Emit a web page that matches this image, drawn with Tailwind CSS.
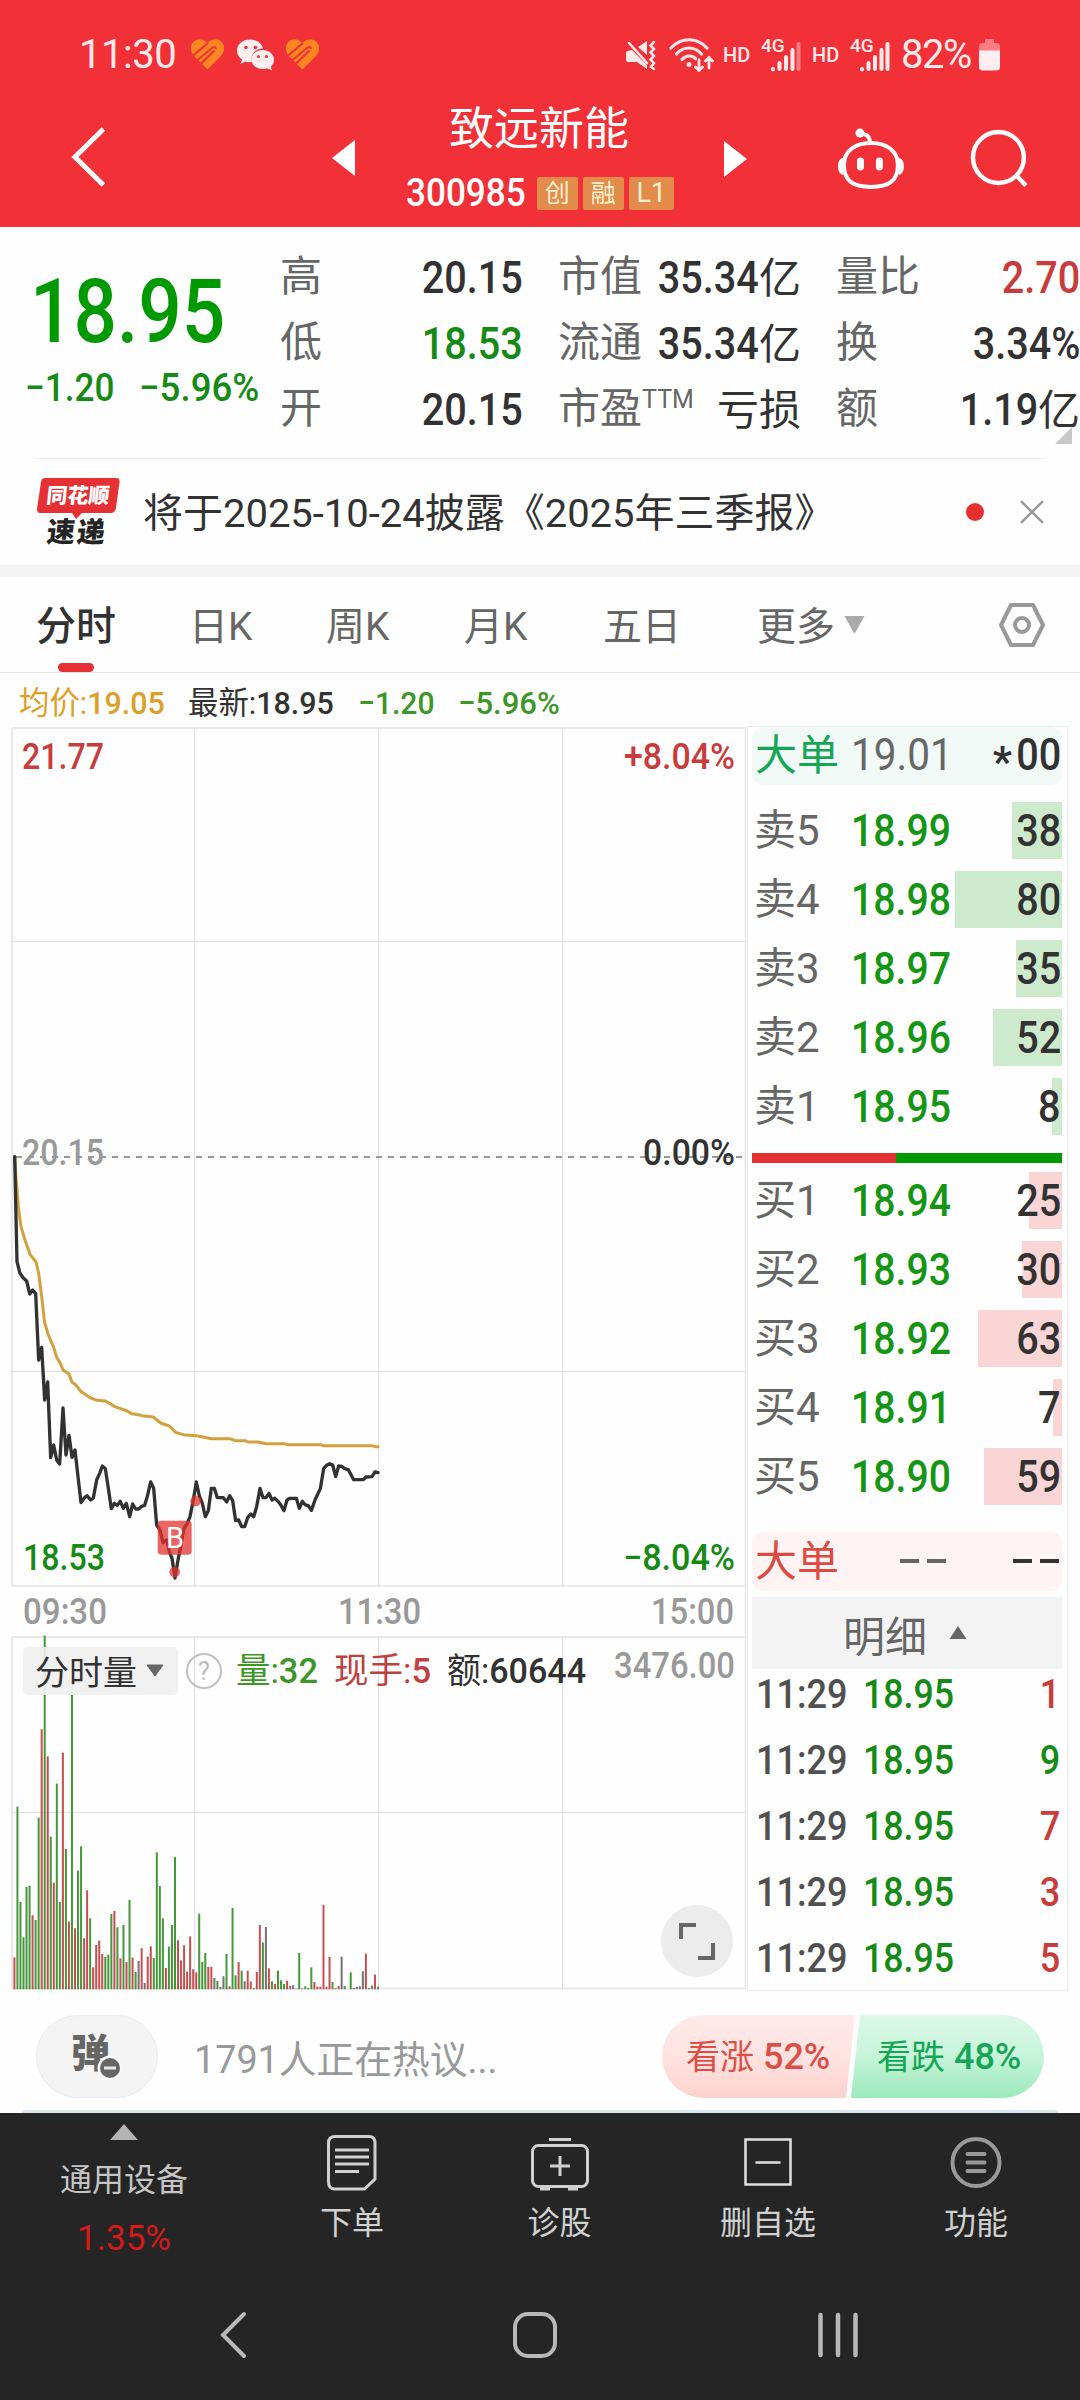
<!DOCTYPE html>
<html lang="zh-CN">
<head>
  <meta charset="UTF-8" />
  <meta name="viewport" content="width=device-width, initial-scale=1.0"/>
  <title>致远新能 300985</title>
  <script src="https://cdn.jsdelivr.net/npm/@tailwindcss/browser@4"></script>
</head>
<body class="w-[1080px] h-[2400px] overflow-hidden bg-[#fefefe] text-[#323232] font-['Roboto','Noto_Sans_CJK_SC',sans-serif]">

  <!-- Status bar + title -->
  <header class="h-[227px] bg-[#f23037] text-white">
    <div class="h-[92px] pt-[17px] pl-[79px] pr-[78px] flex items-center justify-between text-[#ffe9ea]">
      <div class="flex items-center">
        <span class="w-[111px] text-[40px] leading-none tracking-[-0.5px]">11:30</span>
        <svg class="w-[35px] h-[31px]" viewBox="0 0 35 31" fill="none">
          <path d="M17.500 30.500L4 17C-2 10 1 1 9 .5C13 .3 15.500 2 17.500 4C19.500 2 22 .3 26 .5C34 1 37 10 31 17Z" fill="#ff8620"/>
          <path d="M2 17.500L18 4M10 25.500L24.500 11.500" stroke="#f23037" stroke-width="2.200"/>
          <path d="M7 21.500L22.500 8.500Q26 7 26 10" stroke="#f23037" stroke-width="1.800"/>
        </svg>
        <svg class="w-[38px] h-[32px] ml-[12px]" viewBox="0 0 38 32">
          <path fill="#ffeef0" d="M13 0.500C6 .5 0 5 0 11.500C0 15.500 2 18.500 5 20.500L3.500 25L8.500 22.500C11 23.500 13 23.500 15 23C13 15 19 9.500 26 9.500C25 4 19 .5 13 .5Z"/>
          <path fill="#ffeef0" d="M25.500 11C19.500 11 14.500 15 14.500 20.500C14.500 26 19.500 30 25.500 30C27.500 30 29 29.700 30.500 29.200L35 31.500L33.800 27.500C36 25.800 37 23.500 37 20.500C37 15 31.500 11 25.500 11Z"/>
          <g fill="#f23037"><circle cx="9" cy="8.500" r="1.800"/><circle cx="18.500" cy="8.500" r="1.800"/><circle cx="21.500" cy="17.500" r="1.600"/><circle cx="29.500" cy="17.500" r="1.600"/></g>
        </svg>
        <svg class="w-[35px] h-[31px] ml-[10px]" viewBox="0 0 35 31" fill="none">
          <path d="M17.500 30.500L4 17C-2 10 1 1 9 .5C13 .3 15.500 2 17.500 4C19.500 2 22 .3 26 .5C34 1 37 10 31 17Z" fill="#ff8620"/>
          <path d="M2 17.500L18 4M10 25.500L24.500 11.500" stroke="#f23037" stroke-width="2.200"/>
          <path d="M7 21.500L22.500 8.500Q26 7 26 10" stroke="#f23037" stroke-width="1.800"/>
        </svg>
      </div>
      <div class="flex items-center">
        <!-- muted + vibrate -->
        <svg class="w-[30px] h-[32px]" viewBox="0 0 30 32" fill="none" stroke="#ffe9ea" stroke-linecap="round">
          <path d="M2 12L6 11L21 26V30L11 23H2Q0 23 0 21V14Q0 12 2 12ZM12 8L21 2V16Z" fill="#ffe9ea" stroke="none"/>
          <path d="M3 4L21 24" stroke-width="2.500"/>
          <path d="M28 3L24.500 6.500L28 10L24.500 13.500L28 17L24.500 20.500L28 24L25 28L28 30" stroke-width="2.500"/>
        </svg>
        <!-- wifi -->
        <svg class="w-[46px] h-[34px] ml-[13px]" viewBox="0 0 46 34" fill="none" stroke="#ffe9ea" stroke-width="3.200" stroke-linecap="round">
          <path d="M2 10C12 -1 28 -1 38 10M7.500 16C14.500 8 25.500 8 32.500 16M13 21.500C17 17 23 17 26.500 20.500"/>
          <circle cx="20" cy="26.500" r="2.500" fill="#ffe9ea" stroke="none"/>
          <path d="M30 22V32M26.500 29L30 32.500L33.500 29M40 30V19.500M36.500 23L40 19.500L43.500 23" stroke-width="2.800"/>
        </svg>
        <span class="w-[28px] ml-[8px] text-[20px] leading-none font-medium">HD</span>
        <svg class="w-[40px] h-[36px] ml-[11px] overflow-visible" viewBox="0 0 40 36">
          <text x="-1" y="15" font-size="19" font-weight="500" fill="#ffe9ea">4G</text>
          <g stroke="#ffe9ea" stroke-width="4" stroke-linecap="round"><path d="M11 32V32.500M17.500 26V32M24 20V32M30.500 13V32"/><path d="M36.500 7V32" stroke="#ff7b82"/></g>
        </svg>
        <span class="w-[28px] ml-[10px] text-[20px] leading-none font-medium">HD</span>
        <svg class="w-[40px] h-[36px] ml-[11px] overflow-visible" viewBox="0 0 40 36">
          <text x="-1" y="15" font-size="19" font-weight="500" fill="#ffe9ea">4G</text>
          <path d="M11 32V32.500M17.500 26V32M24 20V32M30.500 13V32M36.500 7V32" stroke="#ffe9ea" stroke-width="4" stroke-linecap="round"/>
        </svg>
        <span class="w-[75px] ml-[10px] text-[40px] leading-none tracking-[-1.5px]">82%</span>
        <svg class="w-[22px] h-[32px] ml-[3px] mr-px" viewBox="0 0 22 32">
          <path d="M6 0H15V4H18Q21 4 21 8V12H0V8Q0 4 3 4H6Z" fill="#ff7b82"/>
          <path d="M0 11.500H21V28Q21 31.500 17 31.500H4Q0 31.500 0 28Z" fill="#ffeef0"/>
        </svg>
      </div>
    </div>
    <div class="h-[135px] pl-[70px] pr-[50px] flex items-start">
      <svg class="w-[37px] h-[64px] mt-[33px]" viewBox="0 0 37 64" fill="none" stroke="#fff" stroke-width="5"><path d="M33.500 4L5 32L33.500 60"/></svg>
      <svg class="w-[25px] h-[36px] mt-[48px] ml-[224px]" viewBox="0 0 25 36" fill="#fff"><path d="M24 0V36L1 18Z"/></svg>
      <div class="w-[270px] ml-[50px] flex flex-col items-start">
        <h1 class="pl-[43px] mt-[15px] text-[45px] leading-[46px] whitespace-nowrap">致远新能</h1>
        <div class="mt-[22px] flex items-center h-[36px] text-[25px] leading-[33px] text-[#fff0d0]">
          <span class="w-[131px] text-[39px] leading-none font-medium text-white"><span class="inline-block origin-left scale-x-90">300985</span></span>
          <span class="w-[41px] h-[33px] rounded-xs bg-[#e28b4a] text-center">创</span>
          <span class="w-[41px] h-[33px] ml-[5px] rounded-xs bg-[#e28b4a] text-center">融</span>
          <span class="w-[45px] h-[33px] ml-[5px] rounded-xs bg-[#e28b4a] text-center text-[27px]">L1</span>
        </div>
      </div>
      <svg class="w-[25px] h-[36px] mt-[49px] ml-[49px]" viewBox="0 0 25 36" fill="#fff"><path d="M0 0V36L23 18Z"/></svg>
      <svg class="w-[68px] h-[62px] mt-[35px] ml-[88px]" viewBox="0 0 68 62" fill="none" stroke="#fff" stroke-width="4">
        <path d="M34 16C50 16 61 24 61 38C61 54 52 60 34 60C16 60 7 54 7 38C7 24 18 16 34 16Z"/>
        <path d="M33 16C33 9 30 7 24 7"/>
        <circle cx="23" cy="6" r="4.500" fill="#fff" stroke="none"/>
        <path d="M6 31Q1 32 1 39Q1 47 6 48ZM62 31Q67 32 67 39Q67 47 62 48Z" fill="#fff" stroke="none"/>
        <path d="M23.500 34V40M42.500 34V40" stroke-width="7" stroke-linecap="round"/>
      </svg>
      <svg class="w-[60px] h-[62px] mt-[36px] ml-[65px]" viewBox="0 0 60 62" fill="none" stroke="#fff" stroke-width="4.500"><circle cx="28.500" cy="29.500" r="25.500"/><path d="M46 47L56 57.500"/></svg>
    </div>
  </header>

  <!-- Quote -->
  <section class="relative h-[231px] pt-[15px] flex">
    <div class="w-[280px] font-medium text-[#009900]">
      <div class="mt-[26px] h-[88px] pl-[30px] text-[89px] leading-[88px]"><span class="inline-block origin-left scale-x-[.86]">18.95</span></div>
      <div class="mt-[9px] pl-[25px] h-[46px] flex items-center text-[39px] leading-none text-[#158a15] whitespace-nowrap">
        <span class="w-[114px]"><span class="inline-block origin-left scale-x-90">−1.20</span></span>
        <span class="inline-block origin-left scale-x-[.94]">−5.96%</span>
      </div>
    </div>
    <div id="quote" class="pt-[2px] grid grid-cols-[243px_243px_244px] auto-rows-[66px] gap-x-[35px] text-[42px] leading-none"></div>
    <svg class="absolute left-[1055px] top-[200px] w-[17px] h-[17px]" viewBox="0 0 17 17"><path d="M17 0V17H0Z" fill="#c8c8c8"/></svg>
  </section>

  <!-- News strip -->
  <section class="h-[107px] mx-[36px] border-t border-[#ebebeb] flex items-center">
    <div class="w-[84px] h-[70px] relative">
      <svg class="absolute inset-0 w-[84px] h-[70px]" viewBox="0 0 84 70"><path d="M9 1H80Q84 1 83.500 5L80 31Q79 36 75 36H46L40 42L36 36H4Q1 36 1 32L5 5Q5.500 1 9 1Z" fill="#e53034"/></svg>
      <div class="absolute left-[7px] top-[7px] w-[70px] text-center text-[21px] leading-[24px] font-black text-white -skew-x-6">同花顺</div>
      <div class="absolute left-[8px] top-[41px] w-[66px] text-center text-[28px] leading-[30px] font-black text-[#252525] -skew-x-6 tracking-[2px]">速递</div>
    </div>
    <p class="ml-[23px] pt-[4px] w-[824px] text-[39.500px] leading-none whitespace-nowrap"><span class="inline-block origin-left scale-x-[1.012]">将于2025-10-24披露《2025年三季报》</span></p>
    <span class="w-[18px] h-[18px] rounded-full bg-[#e63030]"></span>
    <svg class="w-[24px] h-[24px] ml-[36px]" viewBox="0 0 24 24" stroke="#999" stroke-width="2.500"><path d="M1 1L23 23M23 1L1 23"/></svg>
  </section>
  <div class="h-[12px] bg-[#f4f4f4]"></div>

  <!-- Period tabs -->
  <nav class="h-[96px] border-b border-[#e4e4e4] flex items-center text-[39px] leading-none text-[#666] whitespace-nowrap">
    <a class="relative h-full w-[157px] pl-[36px] pt-[5px] flex items-center text-[40px] font-medium text-[#323232]">分时
      <span class="absolute left-[58px] bottom-0 w-[36px] h-[9px] rounded-md bg-[#e53034]"></span>
    </a>
    <a class="w-[136px] pl-[32px] pt-[5px]">日K</a>
    <a class="w-[138px] pl-[33px] pt-[5px]">周K</a>
    <a class="w-[138px] pl-[33px] pt-[5px]">月K</a>
    <a class="w-[154px] pl-[34px] pt-[5px]">五日</a>
    <a class="w-[276px] pl-[34px] pt-[5px] flex items-center">更多
      <svg class="w-[21px] h-[17px] ml-[9px] mb-[5px]" viewBox="0 0 21 17"><path d="M1 0H20L10.500 17Z" fill="#aaa" stroke="#aaa" stroke-linejoin="round"/></svg>
    </a>
    <svg class="w-[46px] h-[46px]" viewBox="0 0 46 46" fill="none" stroke="#999" stroke-width="4" stroke-linejoin="round"><path d="M12 3H34L44 23L34 43H12L2 23Z"/><circle cx="23" cy="23" r="7"/></svg>
  </nav>

  <main class="relative flex">
    <!-- Left: intraday + volume -->
    <div class="w-[747px]">
      <div class="h-[54px] pt-[5px] pl-[19px] flex items-center text-[32px] leading-none font-medium whitespace-nowrap text-[#3c9628]">
        <span class="w-[169px] text-[#dca028]"><span class="inline-block origin-left scale-x-[.95]"><span class="font-normal">均价:</span>19.05</span></span>
        <span class="w-[170px] text-[#323232]"><span class="inline-block origin-left scale-x-[.95]"><span class="font-normal">最新:</span>18.95</span></span>
        <span class="w-[100px]"><span class="inline-block origin-left scale-x-[.94]">−1.20</span></span>
        <span class="inline-block origin-left scale-x-[.97]">−5.96%</span>
      </div>

      <svg class="block w-[747px] h-[1265px]" viewBox="0 727 747 1265" fill="none">
        <g stroke="#e6e6e6" stroke-width="1.500">
          <path d="M12 728H746M12 1586H746M12 1637H746M12 1988.500H746M12 728V1586M12 1637V1989M745.500 728V1989" stroke="#e9e9e9" stroke-width="2"/>
          <path d="M12 941.500H745M12 1371.500H745M12 1812.500H745M194.500 728V1586M378.500 728V1586M562.500 728V1586M194.500 1637V1989M378.500 1637V1989M562.500 1637V1989" stroke="#e0e0e0" stroke-width="1"/>
        </g>
        <path d="M16 1157H746" stroke="#999" stroke-width="2" stroke-dasharray="6 6"/>

        <g transform="translate(0 1140) scale(.33333)" stroke-linejoin="round" stroke-linecap="round">
          <polyline stroke="#d2a03c" stroke-width="9" points="44,50 48,110 55,200 63,260 75,300 90,343 108,366 116,400 125,470 134,548 145,585 161,622 170,652 180,668 189,690 207,702 216,727 228,735 243,755 252,760 268,772 290,781 316,783 345,800 379,812 395,821 416,824 425,827 460,831 482,849 508,858 527,877 550,884 590,887 634,896 690,896 705,902 735,902 744,906 774,906 798,911 852,911 862,914 960,914 970,917 1115,917 1125,920 1134,920"/>
          <polyline stroke="#323232" stroke-width="10" points="44,50 51,365 60,400 70,414 80,423 89,462 98,450 107,461 116,660 125,622 134,780 143,726 152,953 161,915 170,960 179,972 189,804 198,945 207,886 216,952 225,930 234,1010 243,1088 252,1075 261,1067 272,1080 280,1074 290,1020 300,998 307,978 316,986 325,1045 334,1106 343,1090 352,1096 361,1084 370,1105 379,1090 389,1130 398,1092 407,1107 416,1107 425,1099 434,1096 443,1065 452,1026 461,1045 470,1155 480,1170 489,1208 500,1200 508,1235 516,1255 525,1314 534,1260 543,1215 552,1165 562,1150 570,1130 580,1080 589,1026 598,1068 607,1090 616,1130 625,1112 634,1045 643,1045 652,1073 670,1073 680,1086 689,1067 698,1082 707,1142 716,1140 725,1160 734,1160 743,1133 752,1122 761,1130 770,1100 780,1045 789,1073 798,1073 807,1060 816,1080 825,1075 834,1084 843,1096 852,1112 861,1080 870,1075 889,1075 898,1105 907,1084 916,1095 925,1097 934,1111 945,1080 961,1046 971,986 980,976 989,971 998,975 1007,1010 1016,978 1025,979 1034,986 1045,989 1061,1019 1090,1019 1098,1011 1116,1010 1125,996 1134,998"/>
          <g fill="#e63232" fill-opacity=".75">
            <rect x="473" y="1142" width="102" height="102" rx="10"/>
            <circle cx="587" cy="1083" r="16"/>
            <circle cx="524" cy="1296" r="16"/>
          </g>
        </g>
        <text x="175" y="1548" text-anchor="middle" font-size="29" fill="#fff">B</text>

        <!-- volume bars -->
        <g id="volume"></g>

        <g font-size="36" font-weight="500">
          <text x="22" y="769" fill="#c83c3c" textLength="82" lengthAdjust="spacingAndGlyphs">21.77</text>
          <text x="624" y="769" fill="#c83c3c" textLength="111" lengthAdjust="spacingAndGlyphs">+8.04%</text>
          <text x="22" y="1165" fill="#999" textLength="82" lengthAdjust="spacingAndGlyphs">20.15</text>
          <text x="643" y="1165" fill="#323232" textLength="92" lengthAdjust="spacingAndGlyphs">0.00%</text>
          <text x="23" y="1570" fill="#158a15" textLength="82" lengthAdjust="spacingAndGlyphs">18.53</text>
          <text x="623" y="1570" fill="#158a15" textLength="112" lengthAdjust="spacingAndGlyphs">−8.04%</text>
          <g fill="#999">
            <text x="23" y="1624" textLength="84" lengthAdjust="spacingAndGlyphs">09:30</text>
            <text x="338" y="1624" textLength="83" lengthAdjust="spacingAndGlyphs">11:30</text>
            <text x="651" y="1624" textLength="83" lengthAdjust="spacingAndGlyphs">15:00</text>
            <text x="614" y="1678" textLength="121" lengthAdjust="spacingAndGlyphs">3476.00</text>
          </g>
        </g>

        <rect x="23" y="1647" width="155" height="48" rx="5" fill="#f0f0f0" fill-opacity=".9"/>
        <text x="35" y="1685" font-size="34" fill="#323232" textLength="102">分时量</text>
        <path d="M147 1665H163L155 1676Z" fill="#666" stroke="#666" stroke-linejoin="round"/>
        <circle cx="204" cy="1671" r="17" stroke="#c0c0c0" stroke-width="2"/>
        <text x="204" y="1680" text-anchor="middle" font-size="25" fill="#bbb">?</text>
        <g font-size="35" font-weight="500">
          <text x="236" y="1683" fill="#3c9628" textLength="82" lengthAdjust="spacingAndGlyphs"><tspan font-weight="400">量:</tspan>32</text>
          <text x="334" y="1683" fill="#be4141" textLength="97" lengthAdjust="spacingAndGlyphs"><tspan font-weight="400">现手:</tspan>5</text>
          <text x="447" y="1683" fill="#323232" textLength="139" lengthAdjust="spacingAndGlyphs"><tspan font-weight="400">额:</tspan>60644</text>
        </g>

        <circle cx="697" cy="1941" r="36" fill="#ececec"/>
        <path d="M681 1939V1925H696M698 1958H713V1943" stroke="#666" stroke-width="4"/>
      </svg>
    </div>

    <!-- Right: order book + ticks -->
    <aside class="w-[321px] h-[1265px] mt-[53px] pl-[4px] pr-[5px] border border-[#ebebeb] leading-none">
      <div class="h-[58px] pl-[3px] pr-px pb-[3px] flex items-center rounded-xl bg-[#f1faf6] text-[42px] whitespace-nowrap">
        <span class="w-[96px] pt-[2px] text-[#14a655]">大单</span>
        <span class="w-[110px] text-[45px] text-[#666]"><span class="inline-block origin-left scale-x-[.9]">19.01</span></span>
        <span class="flex-1 flex justify-end items-center text-[45px] font-medium"><span class="-mr-[2px] pt-[14px] text-[42px] font-bold">*</span><span class="inline-block origin-right scale-x-[.88]">00</span></span>
      </div>
      <div id="asks" class="mt-[17px] flex flex-col gap-[12px]"></div>
      <div class="mt-[18px] h-[10px] flex"><div class="w-[144px] bg-[#e53034]"></div><div class="flex-1 bg-[#009900]"></div></div>
      <div id="bids" class="mt-[9px] flex flex-col gap-[12px]"></div>
      <div class="mt-[27px] h-[59px] pl-[3px] pr-[3px] pb-[3px] flex items-center rounded-xl bg-[#fff4f3] text-[42px]">
        <span class="w-[145px] pt-[3px] text-[#dc4a42]">大单</span>
        <span class="flex gap-[8px] pt-[2px]"><i class="w-[19px] h-[4px] bg-[#666]"></i><i class="w-[19px] h-[4px] bg-[#666]"></i></span>
        <span class="flex gap-[8px] pt-[2px] ml-auto"><i class="w-[19px] h-[4px] bg-[#323232]"></i><i class="w-[19px] h-[4px] bg-[#323232]"></i></span>
      </div>
      <div class="mt-[6px] h-[72px] pl-[91px] flex items-center bg-[#f3f3f3] text-[42px] text-[#666]">
        <span class="pt-[9px]">明细</span>
        <svg class="w-[18px] h-[13px] ml-[22px] mb-[2px]" viewBox="0 0 18 13"><path d="M9 0L17.500 13H.5Z" fill="#666"/></svg>
      </div>
      <div id="ticks" class="mt-[-8px]"></div>
    </aside>
  </main>

  <!-- Discussion bar -->
  <section class="h-[95px] mt-[23px] px-[36px] flex items-start">
    <div class="relative w-[122px] h-[83px] rounded-full bg-[#f4f4f4] border border-[#ebebeb]">
      <span class="absolute left-[34px] top-[17px] text-[39px] leading-[42px] font-black text-[#666]">弹</span>
      <svg class="absolute left-[60px] top-[39px] w-[26px] h-[26px]" viewBox="0 0 26 26"><circle cx="13" cy="13" r="12.500" fill="#f8f8f8"/><circle cx="13" cy="13" r="10" fill="#666"/><path d="M7 13H19" stroke="#e8e8e8" stroke-width="3"/></svg>
    </div>
    <p class="w-[466px] pl-[36px] pt-[2px] text-[38px] leading-[86px] text-[#999] whitespace-nowrap"><span class="inline-block origin-left scale-x-[.993]">1791人正在热议...</span></p>
    <div class="relative ml-[38px] w-[382px] h-[83px] flex text-[34px] leading-[84px] font-medium whitespace-nowrap">
      <svg class="absolute inset-0 w-[382px] h-[83px]" viewBox="0 0 382 83">
        <defs>
          <linearGradient id="up" x2="0" y2="1"><stop offset="0" stop-color="#ffeae9"/><stop offset=".5" stop-color="#ffe3e1"/><stop offset="1" stop-color="#fcd2cd"/></linearGradient>
          <linearGradient id="down" x2="0" y2="1"><stop offset="0" stop-color="#dcf8e7"/><stop offset=".5" stop-color="#c6f4d9"/><stop offset="1" stop-color="#9be9bb"/></linearGradient>
        </defs>
        <path d="M41.500 0H193L184 83H41.500A41.500 41.500 0 0 1 41.500 0Z" fill="url(#up)"/>
        <path d="M198 0H340.500A41.500 41.500 0 0 1 340.500 83H189Z" fill="url(#down)"/>
      </svg>
      <span class="relative w-[192px] pl-[24px] text-[#dc4f47]"><span class="font-normal">看涨</span><span class="text-[36px]"> 52%</span></span>
      <span class="relative pl-[23px] text-[#14a655]"><span class="font-normal">看跌</span><span class="text-[36px]"> 48%</span></span>
    </div>
  </section>
  <div class="h-[3px] mx-[22px] rounded-t-lg bg-[#dbe7f2]"></div>

  <!-- Bottom toolbar + system nav -->
  <footer class="h-[287px] bg-[#252525] text-[#d0d0d0] text-[32px] leading-none">
    <div class="h-[157px] flex pl-[10px]">
      <div class="w-[228px] flex flex-col items-center text-[#c4c4c4]">
        <svg class="w-[28px] h-[16px] mt-[11px]" viewBox="0 0 28 16"><path d="M14 0L28 16H0Z" fill="#b3b3b3"/></svg>
        <span class="mt-[24px]">通用设备</span>
        <span class="mt-[25px] text-[35px] text-[#d41a1a]"><span class="inline-block">1.35%</span></span>
      </div>
      <div class="w-[228px] flex flex-col items-center">
        <svg class="w-[50px] h-[56px] mt-[22px]" viewBox="0 0 50 56" fill="none" stroke="#d0d0d0" stroke-width="3"><path d="M8 1.500H42Q48 1.500 48 8V44L37.500 54H8Q1.500 54 1.500 47V8Q1.500 1.500 8 1.500ZM8 15H42M8 22H42M8 29H42M8 36.500H32"/></svg>
        <span class="mt-[16px]">下单</span>
      </div>
      <div class="w-[187px] flex flex-col items-center">
        <svg class="w-[58px] h-[53px] mt-[25px]" viewBox="0 0 58 53" fill="none" stroke="#d0d0d0" stroke-width="3"><rect x="1.500" y="7.500" width="55" height="41" rx="6"/><path d="M18 1.500H40M29 18V38M19 28H39M9 51H19M37 51H47"/></svg>
        <span class="mt-[16px]">诊股</span>
      </div>
      <div class="w-[230px] flex flex-col items-center">
        <svg class="w-[48px] h-[48px] mt-[25px]" viewBox="0 0 48 48" fill="none" stroke="#e0e0e0" stroke-width="2.500"><rect x="1.500" y="1.500" width="45" height="45"/><path d="M11.500 24.500H36.500"/></svg>
        <span class="mt-[21px]">删自选</span>
      </div>
      <div class="w-[186px] flex flex-col items-center">
        <svg class="w-[52px] h-[52px] mt-[23px]" viewBox="0 0 52 52" fill="none" stroke="#999" stroke-width="4"><circle cx="26" cy="26.500" r="23.500"/><path d="M17.500 18H34.500M17.500 26.500H34.500M17.500 35H34.500" stroke-linecap="round"/></svg>
        <span class="mt-[19px]">功能</span>
      </div>
    </div>
    <div class="h-[130px] pt-[41px] flex">
      <svg class="w-[30px] h-[48px] ml-[218px]" viewBox="0 0 30 48" fill="none" stroke="#b8b8b8" stroke-width="4" stroke-linecap="round"><path d="M26 3L5 24L26 45"/></svg>
      <svg class="w-[46px] h-[48px] ml-[264px]" viewBox="0 0 46 48" fill="none" stroke="#b8b8b8" stroke-width="4"><rect x="3" y="3" width="40" height="42" rx="13"/></svg>
      <svg class="w-[42px] h-[48px] ml-[259px]" viewBox="0 0 42 48" stroke="#b8b8b8" stroke-width="4.500" stroke-linecap="round"><path d="M3.500 4V44M21 4V44M38.500 4V44"/></svg>
    </div>
  </footer>

  <script>
    const quote = [
      ['高', '20.15'], ['市值', '35.34亿'], ['量比', '2.70', 'text-[#c83c3c]'],
      ['低', '18.53', 'text-[#158a15]'], ['流通', '35.34亿'], ['换', '3.34%'],
      ['开', '20.15'], ['市盈<sup class="text-[25px] -top-[15px]">TTM</sup>', '亏损'], ['额', '1.19亿']
    ];
    document.getElementById('quote').innerHTML = quote.map(([label, value, color]) => `
      <div class="flex items-center justify-between whitespace-nowrap">
        <span class="text-[#666]">${label}</span>
        <span class="text-[45px] font-medium ${color || ''}">${value.replace(/([\d.%]+)/, '<span class="inline-block -ml-4 origin-right scale-x-[.88]">$1</span>').replace(/(亿|亏损)/, '<span class="text-[42px] font-normal">$1</span>')}</span>
      </div>`).join('');

    // [label, price, lots, bar width]
    const asks = [['卖5', '18.99', 38, 50], ['卖4', '18.98', 80, 107], ['卖3', '18.97', 35, 46], ['卖2', '18.96', 52, 69], ['卖1', '18.95', 8, 10]];
    const bids = [['买1', '18.94', 25, 33], ['买2', '18.93', 30, 40], ['买3', '18.92', 63, 84], ['买4', '18.91', 7, 9], ['买5', '18.90', 59, 78]];
    const level = (bar) => ([label, price, lots, width]) => `
      <div class="relative h-[57px] pl-[2px] pr-px flex items-center text-[42px]">
        <div class="absolute right-0 top-0 h-full ${bar}" style="width: ${width}px"></div>
        <span class="w-[97px] pt-[1px] text-[#666]">${label}</span>
        <span class="w-[110px] text-[45px] font-medium text-[#149614]"><span class="inline-block origin-left scale-x-[.87]">${price}</span></span>
        <span class="relative flex-1 text-right text-[45px] font-medium"><span class="inline-block origin-right scale-x-[.88]">${lots}</span></span>
      </div>`;
    document.getElementById('asks').innerHTML = asks.map(level('bg-[#cdeacd]')).join('');
    document.getElementById('bids').innerHTML = bids.map(level('bg-[#fad5d5]')).join('');

    const ticks = [[1, 'text-[#c83c3c]'], [9, 'text-[#158a15]'], [7, 'text-[#c83c3c]'], [3, 'text-[#c83c3c]'], [5, 'text-[#c83c3c]']];
    document.getElementById('ticks').innerHTML = ticks.map(([lots, color]) => `
      <div class="h-[66px] pl-[4px] pr-[2px] flex items-center text-[41px] font-medium">
        <span class="w-[107px] text-[#505050]"><span class="inline-block origin-left scale-x-[.88]">11:29</span></span>
        <span class="w-[110px] text-[#158a15]"><span class="inline-block origin-left scale-x-[.87]">18.95</span></span>
        <span class="flex-1 text-right ${color}"><span class="inline-block origin-right scale-x-[.88]">${lots}</span></span>
      </div>`).join('');

    // r = up, g = down, k = flat; the number is the bar height in thirds of a pixel
    const volume = 'r96 g548 g262 g156 g307 g311 r222 g208 g515 r780 g1061 r699 g458 r320 g617 g262 r710 g421 r203 g894 r183 g356 g429 r153 r297 g213 r66 r133 r146 r106 g97 g104 g226 r235 g186 r93 g193 r82 g268 r95 g52 k85 r123 k19 r98 r129 g94 g411 g310 g213 r64 g128 g193 g397 r147 r87 r132 r53 r159 r60 r51 g227 g82 g109 r67 r67 k34 g25 k7 k39 g106 r9 g244 g42 r82 g56 k24 r56 r23 g4 r52 r193 g140 k187 r63 g24 r16 g56 g27 g16 r25 r10 k12 k2 g109 r3 g9 g4 g66 r22 r8 r8 r253 r8 r97 g22 r3 r10 k98 g10 k0 g51 g4 k7 k9 k54 r107 k4 k11 r44 g8'.split(' ');
    const fill = { r: '#c35050', g: '#46963c', k: '#737373' };
    document.getElementById('volume').innerHTML = volume.map((v, i) => {
      const h = v.slice(1) / 3;
      return `<rect x="${(13.4 + i * 3.03).toFixed(2)}" y="${1989.3 - h}" width="2" height="${h}" fill="${fill[v[0]]}"/>`;
    }).join('');
  </script>
</body>
</html>
